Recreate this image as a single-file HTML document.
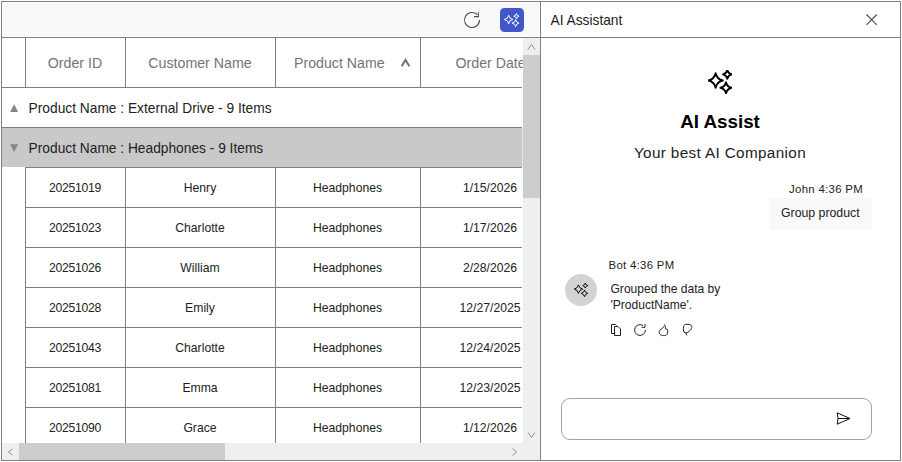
<!DOCTYPE html>
<html><head><meta charset="utf-8"><style>
html,body{margin:0;padding:0;background:#fff;}
body{width:902px;height:462px;position:relative;overflow:hidden;font-family:"Liberation Sans", sans-serif;}
</style></head><body>
<div style="position:absolute;left:1px;top:1px;width:900px;height:460px;box-sizing:border-box;border:1px solid #808080;"></div>
<div style="position:absolute;left:3px;top:3px;width:536px;height:33px;background:#f9f9f9;"></div>
<div style="position:absolute;left:2px;top:37px;width:538px;height:1px;background:#808080;"></div>
<div style="position:absolute;left:540px;top:2px;width:1px;height:458px;background:#808080;"></div>
<div style="position:absolute;left:541px;top:37px;width:359px;height:1px;background:#808080;"></div>
<div style="position:absolute;left:2px;top:87px;width:520px;height:1px;background:#808080;"></div>
<div style="position:absolute;left:25px;top:38px;width:1px;height:49px;background:#808080;"></div>
<div style="position:absolute;left:125px;top:38px;width:1px;height:49px;background:#808080;"></div>
<div style="position:absolute;left:275px;top:38px;width:1px;height:49px;background:#808080;"></div>
<div style="position:absolute;left:420px;top:38px;width:1px;height:49px;background:#808080;"></div>
<div style="position:absolute;left:25px;width:100px;text-align:center;top:56.48px;font-size:14.2px;line-height:14.2px;color:#747474;font-weight:400;white-space:nowrap;">Order ID</div>
<div style="position:absolute;left:125px;width:150px;text-align:center;top:56.48px;font-size:14.2px;line-height:14.2px;color:#747474;font-weight:400;white-space:nowrap;">Customer Name</div>
<div style="position:absolute;left:294px;top:56.48px;font-size:14.2px;line-height:14.2px;color:#747474;font-weight:400;white-space:nowrap;">Product Name</div>
<div style="position:absolute;left:455.5px;top:56.48px;font-size:14.2px;line-height:14.2px;color:#747474;font-weight:400;white-space:nowrap;">Order Date</div>
<svg style="position:absolute;left:400px;top:57px" width="11" height="10" viewBox="0 0 11 10"><path d="M1.6 9.3 L5.5 2.9 L9.4 9.3" fill="none" stroke="#707070" stroke-width="1.9"/></svg>
<div style="position:absolute;left:2px;top:127px;width:520px;height:1px;background:#808080;"></div>
<div style="position:absolute;left:2px;top:128px;width:520px;height:39px;background:#c9c9c9;"></div>
<div style="position:absolute;left:522px;top:128px;width:1px;height:39px;background:#e2e2e2;"></div>
<div style="position:absolute;left:25px;top:167px;width:497px;height:1px;background:#808080;"></div>
<div style="position:absolute;left:28.6px;top:101.86px;font-size:13.75px;line-height:13.75px;color:#222;font-weight:400;white-space:nowrap;">Product Name : External Drive - 9 Items</div>
<div style="position:absolute;left:28.6px;top:141.86px;font-size:13.75px;line-height:13.75px;color:#222;font-weight:400;white-space:nowrap;">Product Name : Headphones - 9 Items</div>
<svg style="position:absolute;left:9px;top:103px" width="11" height="10" viewBox="0 0 11 10"><path d="M1.2 8.9 L5.1 1.2 L9.1 8.9 Z" fill="#858585"/></svg>
<svg style="position:absolute;left:9px;top:143px" width="11" height="10" viewBox="0 0 11 10"><path d="M1.2 1.2 L9.1 1.2 L5.1 8.9 Z" fill="#858585"/></svg>
<div style="position:absolute;left:25px;top:168px;width:1px;height:39px;background:#808080;"></div>
<div style="position:absolute;left:125px;top:168px;width:1px;height:39px;background:#808080;"></div>
<div style="position:absolute;left:275px;top:168px;width:1px;height:39px;background:#808080;"></div>
<div style="position:absolute;left:420px;top:168px;width:1px;height:39px;background:#808080;"></div>
<div style="position:absolute;left:25px;top:207px;width:497px;height:1px;background:#808080;"></div>
<div style="position:absolute;left:25px;width:100px;text-align:center;top:181.67px;font-size:12.2px;line-height:12.2px;color:#222;font-weight:400;white-space:nowrap;letter-spacing:-0.3px;">20251019</div>
<div style="position:absolute;left:125px;width:150px;text-align:center;top:181.67px;font-size:12.2px;line-height:12.2px;color:#222;font-weight:400;white-space:nowrap;">Henry</div>
<div style="position:absolute;left:275px;width:145px;text-align:center;top:181.67px;font-size:12.2px;line-height:12.2px;color:#222;font-weight:400;white-space:nowrap;">Headphones</div>
<div style="position:absolute;left:420px;width:140px;text-align:center;top:181.67px;font-size:12.2px;line-height:12.2px;color:#222;font-weight:400;white-space:nowrap;">1/15/2026</div>
<div style="position:absolute;left:25px;top:208px;width:1px;height:39px;background:#808080;"></div>
<div style="position:absolute;left:125px;top:208px;width:1px;height:39px;background:#808080;"></div>
<div style="position:absolute;left:275px;top:208px;width:1px;height:39px;background:#808080;"></div>
<div style="position:absolute;left:420px;top:208px;width:1px;height:39px;background:#808080;"></div>
<div style="position:absolute;left:25px;top:247px;width:497px;height:1px;background:#808080;"></div>
<div style="position:absolute;left:25px;width:100px;text-align:center;top:221.67px;font-size:12.2px;line-height:12.2px;color:#222;font-weight:400;white-space:nowrap;letter-spacing:-0.3px;">20251023</div>
<div style="position:absolute;left:125px;width:150px;text-align:center;top:221.67px;font-size:12.2px;line-height:12.2px;color:#222;font-weight:400;white-space:nowrap;">Charlotte</div>
<div style="position:absolute;left:275px;width:145px;text-align:center;top:221.67px;font-size:12.2px;line-height:12.2px;color:#222;font-weight:400;white-space:nowrap;">Headphones</div>
<div style="position:absolute;left:420px;width:140px;text-align:center;top:221.67px;font-size:12.2px;line-height:12.2px;color:#222;font-weight:400;white-space:nowrap;">1/17/2026</div>
<div style="position:absolute;left:25px;top:248px;width:1px;height:39px;background:#808080;"></div>
<div style="position:absolute;left:125px;top:248px;width:1px;height:39px;background:#808080;"></div>
<div style="position:absolute;left:275px;top:248px;width:1px;height:39px;background:#808080;"></div>
<div style="position:absolute;left:420px;top:248px;width:1px;height:39px;background:#808080;"></div>
<div style="position:absolute;left:25px;top:287px;width:497px;height:1px;background:#808080;"></div>
<div style="position:absolute;left:25px;width:100px;text-align:center;top:261.67px;font-size:12.2px;line-height:12.2px;color:#222;font-weight:400;white-space:nowrap;letter-spacing:-0.3px;">20251026</div>
<div style="position:absolute;left:125px;width:150px;text-align:center;top:261.67px;font-size:12.2px;line-height:12.2px;color:#222;font-weight:400;white-space:nowrap;">William</div>
<div style="position:absolute;left:275px;width:145px;text-align:center;top:261.67px;font-size:12.2px;line-height:12.2px;color:#222;font-weight:400;white-space:nowrap;">Headphones</div>
<div style="position:absolute;left:420px;width:140px;text-align:center;top:261.67px;font-size:12.2px;line-height:12.2px;color:#222;font-weight:400;white-space:nowrap;">2/28/2026</div>
<div style="position:absolute;left:25px;top:288px;width:1px;height:39px;background:#808080;"></div>
<div style="position:absolute;left:125px;top:288px;width:1px;height:39px;background:#808080;"></div>
<div style="position:absolute;left:275px;top:288px;width:1px;height:39px;background:#808080;"></div>
<div style="position:absolute;left:420px;top:288px;width:1px;height:39px;background:#808080;"></div>
<div style="position:absolute;left:25px;top:327px;width:497px;height:1px;background:#808080;"></div>
<div style="position:absolute;left:25px;width:100px;text-align:center;top:301.67px;font-size:12.2px;line-height:12.2px;color:#222;font-weight:400;white-space:nowrap;letter-spacing:-0.3px;">20251028</div>
<div style="position:absolute;left:125px;width:150px;text-align:center;top:301.67px;font-size:12.2px;line-height:12.2px;color:#222;font-weight:400;white-space:nowrap;">Emily</div>
<div style="position:absolute;left:275px;width:145px;text-align:center;top:301.67px;font-size:12.2px;line-height:12.2px;color:#222;font-weight:400;white-space:nowrap;">Headphones</div>
<div style="position:absolute;left:420px;width:140px;text-align:center;top:301.67px;font-size:12.2px;line-height:12.2px;color:#222;font-weight:400;white-space:nowrap;">12/27/2025</div>
<div style="position:absolute;left:25px;top:328px;width:1px;height:39px;background:#808080;"></div>
<div style="position:absolute;left:125px;top:328px;width:1px;height:39px;background:#808080;"></div>
<div style="position:absolute;left:275px;top:328px;width:1px;height:39px;background:#808080;"></div>
<div style="position:absolute;left:420px;top:328px;width:1px;height:39px;background:#808080;"></div>
<div style="position:absolute;left:25px;top:367px;width:497px;height:1px;background:#808080;"></div>
<div style="position:absolute;left:25px;width:100px;text-align:center;top:341.67px;font-size:12.2px;line-height:12.2px;color:#222;font-weight:400;white-space:nowrap;letter-spacing:-0.3px;">20251043</div>
<div style="position:absolute;left:125px;width:150px;text-align:center;top:341.67px;font-size:12.2px;line-height:12.2px;color:#222;font-weight:400;white-space:nowrap;">Charlotte</div>
<div style="position:absolute;left:275px;width:145px;text-align:center;top:341.67px;font-size:12.2px;line-height:12.2px;color:#222;font-weight:400;white-space:nowrap;">Headphones</div>
<div style="position:absolute;left:420px;width:140px;text-align:center;top:341.67px;font-size:12.2px;line-height:12.2px;color:#222;font-weight:400;white-space:nowrap;">12/24/2025</div>
<div style="position:absolute;left:25px;top:368px;width:1px;height:39px;background:#808080;"></div>
<div style="position:absolute;left:125px;top:368px;width:1px;height:39px;background:#808080;"></div>
<div style="position:absolute;left:275px;top:368px;width:1px;height:39px;background:#808080;"></div>
<div style="position:absolute;left:420px;top:368px;width:1px;height:39px;background:#808080;"></div>
<div style="position:absolute;left:25px;top:407px;width:497px;height:1px;background:#808080;"></div>
<div style="position:absolute;left:25px;width:100px;text-align:center;top:381.67px;font-size:12.2px;line-height:12.2px;color:#222;font-weight:400;white-space:nowrap;letter-spacing:-0.3px;">20251081</div>
<div style="position:absolute;left:125px;width:150px;text-align:center;top:381.67px;font-size:12.2px;line-height:12.2px;color:#222;font-weight:400;white-space:nowrap;">Emma</div>
<div style="position:absolute;left:275px;width:145px;text-align:center;top:381.67px;font-size:12.2px;line-height:12.2px;color:#222;font-weight:400;white-space:nowrap;">Headphones</div>
<div style="position:absolute;left:420px;width:140px;text-align:center;top:381.67px;font-size:12.2px;line-height:12.2px;color:#222;font-weight:400;white-space:nowrap;">12/23/2025</div>
<div style="position:absolute;left:25px;top:408px;width:1px;height:35px;background:#808080;"></div>
<div style="position:absolute;left:125px;top:408px;width:1px;height:35px;background:#808080;"></div>
<div style="position:absolute;left:275px;top:408px;width:1px;height:35px;background:#808080;"></div>
<div style="position:absolute;left:420px;top:408px;width:1px;height:35px;background:#808080;"></div>
<div style="position:absolute;left:25px;width:100px;text-align:center;top:421.67px;font-size:12.2px;line-height:12.2px;color:#222;font-weight:400;white-space:nowrap;letter-spacing:-0.3px;">20251090</div>
<div style="position:absolute;left:125px;width:150px;text-align:center;top:421.67px;font-size:12.2px;line-height:12.2px;color:#222;font-weight:400;white-space:nowrap;">Grace</div>
<div style="position:absolute;left:275px;width:145px;text-align:center;top:421.67px;font-size:12.2px;line-height:12.2px;color:#222;font-weight:400;white-space:nowrap;">Headphones</div>
<div style="position:absolute;left:420px;width:140px;text-align:center;top:421.67px;font-size:12.2px;line-height:12.2px;color:#222;font-weight:400;white-space:nowrap;">1/12/2026</div>
<div style="position:absolute;left:523px;top:38px;width:17px;height:405px;background:#efefef;"></div>
<div style="position:absolute;left:523px;top:55px;width:17px;height:143px;background:#cdcdcd;"></div>
<svg style="position:absolute;left:526px;top:41px" width="11" height="12" viewBox="0 0 11 12"><path d="M2 8.5 L5.5 3.5 L9 8.5" fill="none" stroke="#8e8e8e" stroke-width="1"/></svg>
<svg style="position:absolute;left:526px;top:429px" width="11" height="12" viewBox="0 0 11 12"><path d="M2 3.5 L5.5 8.5 L9 3.5" fill="none" stroke="#8e8e8e" stroke-width="1"/></svg>
<div style="position:absolute;left:2px;top:443px;width:538px;height:17px;background:#efefef;"></div>
<div style="position:absolute;left:19px;top:443px;width:206px;height:17px;background:#cdcdcd;"></div>
<svg style="position:absolute;left:5px;top:446px" width="10" height="12" viewBox="0 0 10 12"><path d="M7.5 3 L3.5 6 L7.5 9" fill="none" stroke="#8e8e8e" stroke-width="1"/></svg>
<svg style="position:absolute;left:509px;top:446px" width="10" height="12" viewBox="0 0 10 12"><path d="M3.5 2.5 L7.5 6 L3.5 9.5" fill="none" stroke="#8e8e8e" stroke-width="1"/></svg>
<svg style="position:absolute;left:460px;top:8px" width="24" height="24" viewBox="0 0 24 24"><path d="M19.5 12 A7.5 7.5 0 1 1 17.3 6.7" fill="none" stroke="#4b4b55" stroke-width="1.1"/><path d="M18.4 4.2 V8.6 H14" fill="none" stroke="#4b4b55" stroke-width="1.1"/></svg>
<div style="position:absolute;left:500px;top:8px;width:24px;height:24px;background:#4257cb;border-radius:4.5px;"></div>
<svg style="position:absolute;left:503.85px;top:12.9px" width="15" height="15" viewBox="0 0 24 24"><path d="M7.44 3.4000000000000004 Q8.14 9.700000000000001 14.440000000000001 10.4 Q8.14 11.1 7.44 17.4 Q6.74 11.1 0.4400000000000004 10.4 Q6.74 9.700000000000001 7.44 3.4000000000000004 Z M19.9 0.7999999999999998 Q20.415999999999997 4.584 24.2 5.1 Q20.415999999999997 5.616 19.9 9.399999999999999 Q19.384 5.616 15.599999999999998 5.1 Q19.384 4.584 19.9 0.7999999999999998 Z M18.6 10.6 Q19.272000000000002 15.527999999999999 24.200000000000003 16.2 Q19.272000000000002 16.872 18.6 21.799999999999997 Q17.928 16.872 13.000000000000002 16.2 Q17.928 15.527999999999999 18.6 10.6 Z" fill="none" stroke="#fff" stroke-width="1.6" stroke-linejoin="round"/></svg>
<div style="position:absolute;left:550.5px;top:14.26px;font-size:13.75px;line-height:13.75px;color:#222;font-weight:400;white-space:nowrap;">AI Assistant</div>
<svg style="position:absolute;left:865px;top:13px" width="14" height="14" viewBox="0 0 14 14"><path d="M1.5 1.5 L11.8 11.8 M11.8 1.5 L1.5 11.8" fill="none" stroke="#4b4b55" stroke-width="1.1"/></svg>
<svg style="position:absolute;left:708px;top:70px" width="24" height="24" viewBox="0 0 24 24"><path d="M7.6 3.3 Q8.895999999999999 9.204 14.8 10.5 Q8.895999999999999 11.796 7.6 17.7 Q6.303999999999999 11.796 0.39999999999999947 10.5 Q6.303999999999999 9.204 7.6 3.3 Z M19.3 0.10000000000000053 Q20.074 3.6260000000000003 23.6 4.4 Q20.074 5.174 19.3 8.7 Q18.526 5.174 15.0 4.4 Q18.526 3.6260000000000003 19.3 0.10000000000000053 Z M18 12.200000000000001 Q19.008 16.792 23.6 17.8 Q19.008 18.808 18 23.4 Q16.992 18.808 12.4 17.8 Q16.992 16.792 18 12.200000000000001 Z" fill="none" stroke="#000" stroke-width="1.9" stroke-linejoin="round"/></svg>
<div style="position:absolute;left:620px;width:200px;text-align:center;top:112.59px;font-size:18.8px;line-height:18.8px;color:#000;font-weight:700;white-space:nowrap;">AI Assist</div>
<div style="position:absolute;left:600px;width:240px;text-align:center;top:145.05px;font-size:15.3px;line-height:15.3px;color:#222;font-weight:400;white-space:nowrap;letter-spacing:0.35px;">Your best AI Companion</div>
<div style="position:absolute;left:743px;width:120px;text-align:right;top:183.95px;font-size:11.4px;line-height:11.4px;color:#222;font-weight:400;white-space:nowrap;letter-spacing:0.3px;">John 4:36 PM</div>
<div style="position:absolute;left:769px;top:198px;width:103px;height:32px;background:#f9f9f9;border-radius:4px;"></div>
<div style="position:absolute;left:781px;top:206.59px;font-size:12.3px;line-height:12.3px;color:#222;font-weight:400;white-space:nowrap;">Group product</div>
<div style="position:absolute;left:608.5px;top:259.95px;font-size:11.4px;line-height:11.4px;color:#222;font-weight:400;white-space:nowrap;letter-spacing:0.3px;">Bot 4:36 PM</div>
<div style="position:absolute;left:565px;top:274px;width:32px;height:32px;background:#d3d3d3;border-radius:50%;"></div>
<svg style="position:absolute;left:573.9px;top:283.2px" width="14" height="14" viewBox="0 0 24 24"><path d="M7.6 3.3 Q8.895999999999999 9.204 14.8 10.5 Q8.895999999999999 11.796 7.6 17.7 Q6.303999999999999 11.796 0.39999999999999947 10.5 Q6.303999999999999 9.204 7.6 3.3 Z M19.3 0.10000000000000053 Q20.074 3.6260000000000003 23.6 4.4 Q20.074 5.174 19.3 8.7 Q18.526 5.174 15.0 4.4 Q18.526 3.6260000000000003 19.3 0.10000000000000053 Z M18 12.200000000000001 Q19.008 16.792 23.6 17.8 Q19.008 18.808 18 23.4 Q16.992 18.808 12.4 17.8 Q16.992 16.792 18 12.200000000000001 Z" fill="none" stroke="#000" stroke-width="1.65" stroke-linejoin="round"/></svg>
<div style="position:absolute;left:610.5px;top:282.80px;font-size:12.05px;line-height:12.05px;color:#222;font-weight:400;white-space:nowrap;">Grouped the data by</div>
<div style="position:absolute;left:610.5px;top:298.80px;font-size:12.05px;line-height:12.05px;color:#222;font-weight:400;white-space:nowrap;">'ProductName'.</div>
<svg style="position:absolute;left:610px;top:323px" width="13" height="14" viewBox="0 0 13 14"><path d="M1.5 10.5 V1.5 H5.5 L6.5 2.5" fill="none" stroke="#222" stroke-width="1"/><path d="M1.5 10.5 H4.5" fill="none" stroke="#222" stroke-width="1"/><path d="M4.5 3.5 H8 L10.5 6 V12.5 H4.5 Z" fill="none" stroke="#222" stroke-width="1" stroke-linejoin="miter"/></svg>
<svg style="position:absolute;left:633px;top:323px" width="14" height="14" viewBox="0 0 14 14"><path d="M12.4 7 A5.4 5.4 0 1 1 10.1 2.6" fill="none" stroke="#222" stroke-width="1"/><path d="M12 1.2 V4.3 H8.6" fill="none" stroke="#222" stroke-width="1"/></svg>
<svg style="position:absolute;left:657px;top:323px" width="12" height="14" viewBox="0 0 12 14"><path d="M7 1.2 C8 1.8 8.5 3.5 8.5 5.8 L10.5 6.5 C10.8 8 10.8 10 10.2 11.2 C9.5 12.4 8 12.6 6.8 12.6 C5 12.6 3.4 12 2.6 11 C1.9 10 2 8.8 2.5 8 L5.5 4.8 L7.2 3.6" fill="none" stroke="#222" stroke-width="1" stroke-linejoin="round"/></svg>
<svg style="position:absolute;left:682px;top:323px" width="12" height="14" viewBox="0 0 12 14"><path d="M4.9 12.4 L3.8 10 L2 9.2 L1.4 7 C1.2 5 1.6 2.5 3.2 1.3 L7 1.3 C8.5 1.6 9.6 2.4 9.8 3.6 C10 4.8 9.6 6 8.5 7 L6.1 9.2 L3.8 10" fill="none" stroke="#222" stroke-width="1" stroke-linejoin="round"/></svg>
<div style="position:absolute;left:561px;top:398px;width:311px;height:42px;box-sizing:border-box;border:1px solid #a3a3ab;border-radius:9px;"></div>
<svg style="position:absolute;left:836px;top:412px" width="15" height="14" viewBox="0 0 15 14"><path d="M1.2 0.8 L14 6.5 L1.2 12.2 L2 6.5 Z M2 6.5 H13.5" fill="none" stroke="#111" stroke-width="1"/></svg>
</body></html>
